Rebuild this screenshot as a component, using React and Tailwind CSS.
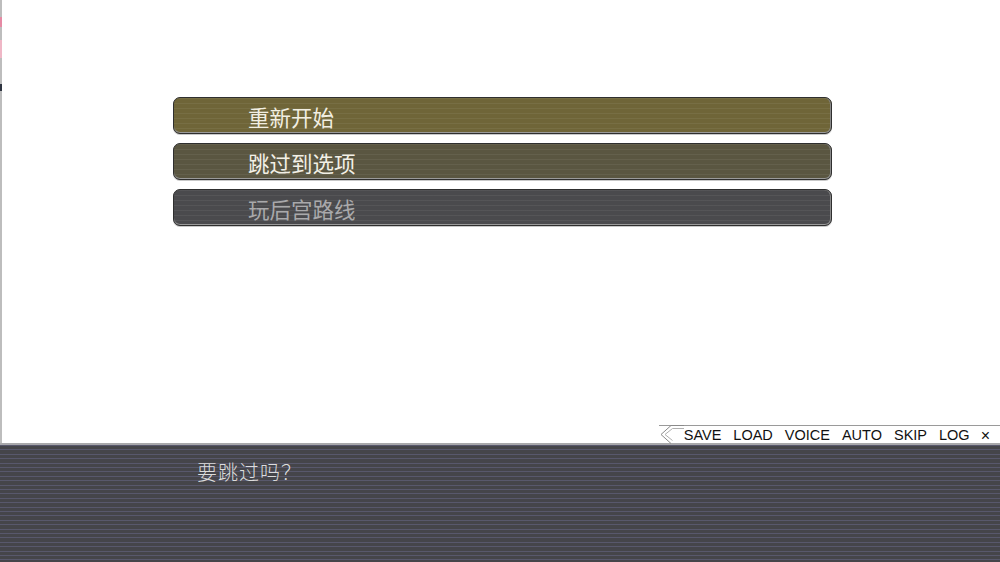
import React from 'react';

const choices = [
    { label: '重新开始', bg: 'bg-[#6f6538]', text: 'text-[#f2efe2]' },
    { label: '跳过到选项', bg: 'bg-[#5a5641]', text: 'text-[#f2f0e6]' },
    { label: '玩后宫路线', bg: 'bg-[#4a4a4d]', text: 'text-[#a9a9ab]' },
];

const menu = ['SAVE', 'LOAD', 'VOICE', 'AUTO', 'SKIP', 'LOG'];

export default function App() {
    return (
        <div className="w-[1000px] h-[562px] flex flex-col bg-white overflow-hidden" style={{ fontFamily: '"Noto Sans CJK SC", sans-serif' }}>
            {/* Scene area */}
            <div className="flex-1 flex flex-col border-l-2 border-[#bdbdbd] relative">
                <div className="absolute left-[-2px] top-[17px] w-[2px] h-[10px] bg-[#e58aa4]"></div>
                <div className="absolute left-[-2px] top-[40px] w-[2px] h-[18px] bg-[#efb7c6]"></div>
                <div className="absolute left-[-2px] top-[84px] w-[2px] h-[7px] bg-[#2e3440]"></div>

                <div className="pt-[97px] pl-[171px] w-[830px] flex flex-col gap-[9px]">
                    {choices.map(c => (
                        <div
                            key={c.label}
                            className={`h-[37px] rounded-[7px] border border-[#2f2f2f] shadow-[inset_0_-1px_0_#9a9a9a,inset_-1px_0_0_#8a8a8a,0_1px_0_#c8c8c8] ${c.bg} flex items-center pl-[74px] bg-[repeating-linear-gradient(180deg,rgba(255,255,255,0.06)_0px,rgba(255,255,255,0.06)_1px,transparent_1px,transparent_5px)]`}
                        >
                            <span className={`text-[21.5px] leading-none mt-[2px] ${c.text}`}>{c.label}</span>
                        </div>
                    ))}
                </div>

                {/* Quick menu */}
                <div className="mt-auto flex justify-end h-[18px]">
                    <div className="flex items-center h-[18px] bg-white border-t border-[#9a9a9a] relative pl-[25px] pr-[10px] pt-[2px]">
                        <svg className="absolute left-0 top-[-1px]" width="25" height="19" viewBox="0 0 25 19">
                            <path d="M25 0.5 L12 0.5 L2 9.5 L12 18.5" fill="none" stroke="#8a8a8a" strokeWidth="1" />
                            <path d="M25 3.5 L13.5 3.5 L6 9.5 L13.5 15.5" fill="none" stroke="#b0b0b0" strokeWidth="1" />
                        </svg>
                        <div className="flex items-center gap-[12px] text-[14.5px] text-[#111] leading-none" style={{ fontFamily: '"Liberation Sans", Arial, sans-serif' }}>
                            {menu.map(m => (
                                <span key={m}>{m}</span>
                            ))}
                            <span className="text-[16px] ml-[-1px]">×</span>
                        </div>
                    </div>
                </div>
            </div>

            {/* Dialogue box */}
            <div className="h-[119px] border-t-2 border-[#a8a8ab] bg-[#47474b] bg-[repeating-linear-gradient(180deg,#58586c_0px,#58586c_1px,#45454a_1px,#45454a_4.4px)] pl-[197px] pt-[12px]">
                <span className="text-[20px] text-[#dcdcdc] tracking-[1px] font-light">要跳过吗？</span>
            </div>
        </div>
    );
}
